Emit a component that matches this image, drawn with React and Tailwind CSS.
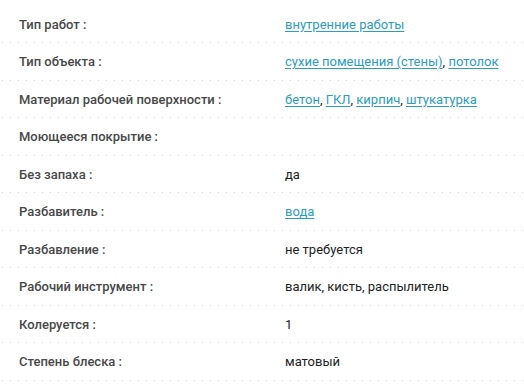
const rows = [
  { label: "Тип работ :", links: ["внутренние работы"] },
  { label: "Тип объекта :", links: ["сухие помещения (стены)", "потолок"] },
  { label: "Материал рабочей поверхности :", links: ["бетон", "ГКЛ", "кирпич", "штукатурка"] },
  { label: "Моющееся покрытие :", text: "" },
  { label: "Без запаха :", text: "да" },
  { label: "Разбавитель :", links: ["вода"] },
  { label: "Разбавление :", text: "не требуется" },
  { label: "Рабочий инструмент :", text: "валик, кисть, распылитель" },
  { label: "Колеруется :", text: "1" },
  { label: "Степень блеска :", text: "матовый" },
];

function Row({ label, links, text }) {
  return (
    <div className="flex items-center h-[37.5px] pl-[19px] bg-[linear-gradient(to_right,#cfcfcf_1.5px,transparent_1.5px)] bg-[length:8px_1px] bg-repeat-x bg-bottom">
      <div className="w-[266px] shrink-0 font-medium text-[#484848]">{label}</div>
      <div className="text-[#222]">
        {links
          ? links.map((l, i) => (
              <span key={l}>
                <a href="#" className="text-[#2b9dc0] underline underline-offset-2">
                  {l}
                </a>
                {i < links.length - 1 && ", "}
              </span>
            ))
          : text}
      </div>
    </div>
  );
}

export default function App() {
  return (
    <div className="w-[524px] h-[389px] bg-white pt-[5.5px] overflow-hidden font-['Roboto',sans-serif] text-[13px]">
      {rows.map((r) => (
        <Row key={r.label} {...r} />
      ))}
    </div>
  );
}
